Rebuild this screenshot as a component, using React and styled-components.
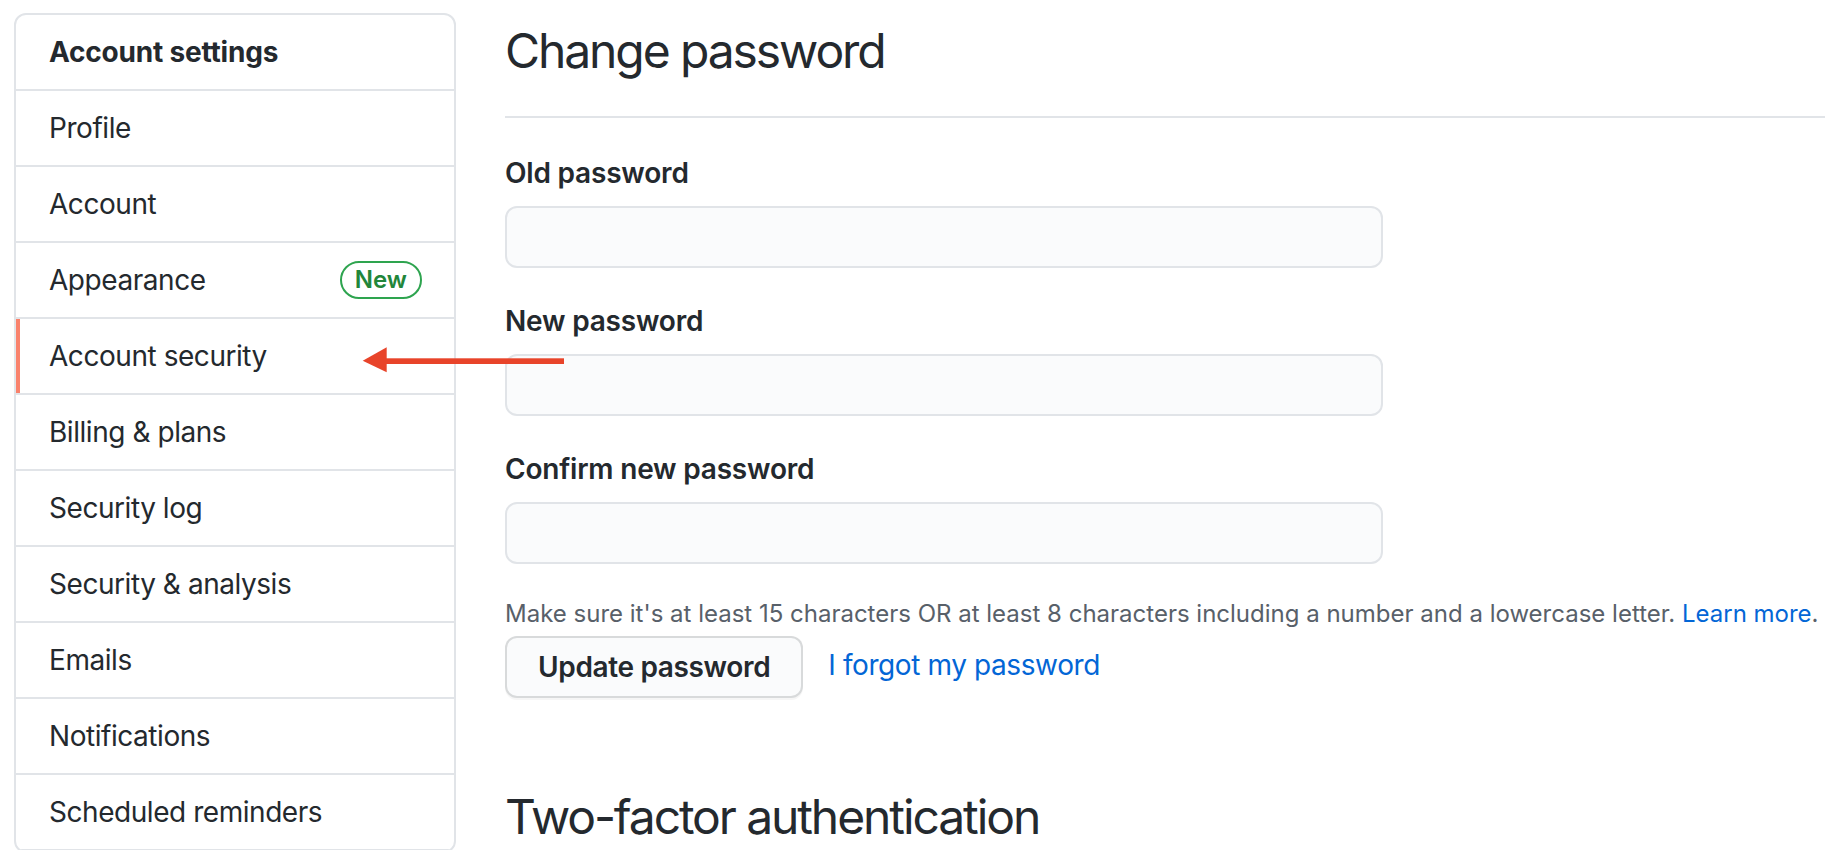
import React from "react";
import styled, { createGlobalStyle } from "styled-components";

const Global = createGlobalStyle`
  html, body { margin: 0; padding: 0; background: #fff; overflow: hidden; }
  body { font-family: Inter, "Liberation Sans", Arial, sans-serif; color: #24292e; }
  * { box-sizing: border-box; }
`;

const Page = styled.div`
  position: relative;
  display: flex;
  align-items: flex-start;
  gap: 49px;
  width: 1825px;
  height: 850px;
  overflow: hidden;
  padding: 13px 0 0 14px;
`;

const Sidebar = styled.nav`
  flex: 0 0 442px;
  border: 2px solid #e1e4e8;
  border-radius: 12px;
  overflow: hidden;
`;

const MenuHeading = styled.div`
  padding: 16px 32px 16px 33px;
  font-size: 28px;
  line-height: 42px;
  font-weight: 700;
  letter-spacing: -0.2px;
  color: #24292e;
  border-bottom: 2px solid #e1e4e8;
`;

const MenuItem = styled.a`
  position: relative;
  display: flex;
  align-items: center;
  justify-content: space-between;
  padding: 16px 32px 16px 33px;
  font-size: 28px;
  line-height: 42px;
  letter-spacing: -0.45px;
  color: #24292e;
  text-decoration: none;
  border-bottom: 2px solid #e1e4e8;

  ${(p) =>
    p.$selected &&
    `
    &::before {
      content: "";
      position: absolute;
      left: 0;
      top: 0;
      bottom: 0;
      width: 4px;
      background: #f9826c;
    }
  `}
`;

const Badge = styled.span`
  display: inline-block;
  padding: 0 13px;
  font-size: 24px;
  line-height: 34px;
  font-weight: 600;
  letter-spacing: 0;
  color: #22863a;
  border: 2px solid #2ea44f;
  border-radius: 999px;
`;

const Main = styled.main`
  flex: 1;
  min-width: 0;
`;

const Subhead = styled.h2`
  margin: ${(p) => (p.$spaced ? "81px 0 0" : "0")};
  padding-bottom: 28px;
  font-size: 48px;
  line-height: 75px;
  font-weight: 400;
  letter-spacing: -2.1px;
  color: #24292e;
  border-bottom: 2px solid #e1e4e8;
`;

const Form = styled.form`
  display: flex;
  flex-direction: column;
  gap: 32px;
  padding-top: 34px;
`;

const FormGroup = styled.div`
  display: flex;
  flex-direction: column;
  gap: 12px;
`;

const Label = styled.label`
  font-size: 28px;
  line-height: 42px;
  font-weight: 600;
  letter-spacing: -0.2px;
  color: #24292e;
`;

const Input = styled.input`
  width: 878px;
  height: 62px;
  border: 2px solid #e1e4e8;
  border-radius: 12px;
  background: #fafbfc;
  padding: 0 16px;
  font-size: 28px;
  outline: none;
`;

const Note = styled.p`
  margin: 0;
  font-size: 24px;
  line-height: 36px;
  color: #586069;
  white-space: nowrap;
`;

const Link = styled.a`
  color: #0366d6;
  text-decoration: none;
`;

const Actions = styled.div`
  display: flex;
  align-items: center;
  gap: 25px;
  margin-top: -28px;
`;

const Button = styled.button`
  height: 62px;
  padding: 0 31px;
  font-family: inherit;
  font-size: 28px;
  font-weight: 600;
  letter-spacing: -0.35px;
  color: #24292e;
  background: #fafbfc;
  border: 2px solid rgba(27, 31, 35, 0.15);
  border-radius: 12px;
  box-shadow: 0 2px 0 rgba(27, 31, 35, 0.04);
`;

const ActionLink = styled(Link)`
  font-size: 28px;
  line-height: 42px;
  letter-spacing: -0.4px;
  margin-bottom: 5px;
`;

const Arrow = styled.svg`
  position: absolute;
  left: 362px;
  top: 346px;
  width: 204px;
  height: 28px;
`;

const items = [
  { label: "Profile" },
  { label: "Account" },
  { label: "Appearance", badge: "New" },
  { label: "Account security", selected: true },
  { label: "Billing & plans" },
  { label: "Security log" },
  { label: "Security & analysis" },
  { label: "Emails" },
  { label: "Notifications" },
  { label: "Scheduled reminders" },
];

export default function App() {
  return (
    <>
      <Global />
      <Page>
        <Sidebar>
          <MenuHeading>Account settings</MenuHeading>
          {items.map((it) => (
            <MenuItem key={it.label} href="#" $selected={it.selected}>
              <span>{it.label}</span>
              {it.badge && <Badge>{it.badge}</Badge>}
            </MenuItem>
          ))}
        </Sidebar>
        <Main>
          <Subhead>Change password</Subhead>
          <Form onSubmit={(e) => e.preventDefault()}>
            <FormGroup>
              <Label>Old password</Label>
              <Input type="password" />
            </FormGroup>
            <FormGroup>
              <Label>New password</Label>
              <Input type="password" />
            </FormGroup>
            <FormGroup>
              <Label>Confirm new password</Label>
              <Input type="password" />
            </FormGroup>
            <Note>
              Make sure it's at least 15 characters OR at least 8 characters including a number and a lowercase letter.{" "}
              <Link href="#">Learn more</Link>.
            </Note>
            <Actions>
              <Button type="submit">Update password</Button>
              <ActionLink href="#">I forgot my password</ActionLink>
            </Actions>
          </Form>
          <Subhead $spaced>Two-factor authentication</Subhead>
        </Main>
        <Arrow viewBox="0 0 204 28">
          <polygon points="0.7,14.7 24.7,1.3 24.7,26.3" fill="#e8442a" />
          <rect x="23" y="12.3" width="179" height="5.7" fill="#e8442a" />
        </Arrow>
      </Page>
    </>
  );
}
